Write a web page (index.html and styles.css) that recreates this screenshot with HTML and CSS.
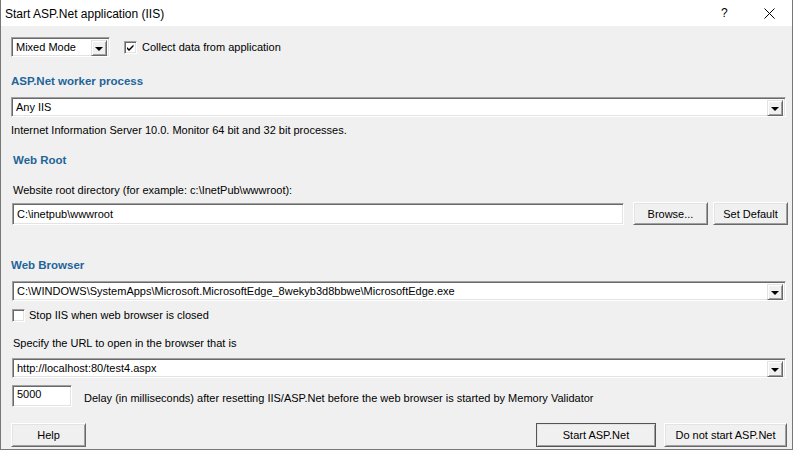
FILE: index.html
```html
<!DOCTYPE html>
<html>
<head>
<meta charset="utf-8">
<link rel="stylesheet" href="styles.css">
</head>
<body>
<div class="window">
  <div class="titlebar">
    <span class="title">Start ASP.Net application (IIS)</span>
    <span class="tb-help">?</span>
    <span class="tb-close"><svg width="11" height="11" viewBox="0 0 11 11"><path d="M0.5 0.5 L10.5 10.5 M10.5 0.5 L0.5 10.5" stroke="#000" stroke-width="1" fill="none"/></svg></span>
  </div>
  <div class="content">
    <div class="row row-mode">
      <div class="combo combo-mode"><span class="combo-text">Mixed Mode</span><span class="arrow"><i></i></span></div>
      <label class="check"><span class="box checked"><svg width="9" height="9" viewBox="0 0 9 9"><path d="M1 4 L3 6 L7.5 1.5 L7.5 3.5 L3 8 L1 6 Z" fill="#000"/></svg></span>Collect data from application</label>
    </div>

    <div class="section s-worker">ASP.Net worker process</div>
    <div class="combo combo-wide c-iis"><span class="combo-text">Any IIS</span><span class="arrow"><i></i></span></div>
    <div class="text t-iis">Internet Information Server 10.0. Monitor 64 bit and 32 bit processes.</div>

    <div class="section s-root">Web Root</div>
    <div class="text t-root">Website root directory (for example: c:\InetPub\wwwroot):</div>
    <div class="row row-root">
      <div class="edit edit-root">C:\inetpub\wwwroot</div>
      <button class="btn btn-browse">Browse...</button>
      <button class="btn btn-default">Set Default</button>
    </div>

    <div class="section s-browser">Web Browser</div>
    <div class="combo combo-wide c-browser"><span class="combo-text">C:\WINDOWS\SystemApps\Microsoft.MicrosoftEdge_8wekyb3d8bbwe\MicrosoftEdge.exe</span><span class="arrow"><i></i></span></div>
    <label class="check check-stop"><span class="box"></span>Stop IIS when web browser is closed</label>
    <div class="text t-url">Specify the URL to open in the browser that is</div>
    <div class="combo combo-wide c-url"><span class="combo-text">http://localhost:80/test4.aspx</span><span class="arrow"><i></i></span></div>
    <div class="row row-delay">
      <div class="edit edit-delay">5000</div>
      <span class="delay-label">Delay (in milliseconds) after resetting IIS/ASP.Net before the web browser is started by Memory Validator</span>
    </div>

    <div class="row footer">
      <button class="btn btn-help">Help</button>
      <span class="spacer"></span>
      <button class="btn btn-start">Start ASP.Net</button>
      <button class="btn btn-nostart">Do not start ASP.Net</button>
    </div>
  </div>
</div>
</body>
</html>
```

FILE: styles.css
```css
* { box-sizing: border-box; }
html, body { margin: 0; padding: 0; }
body {
  width: 793px;
  height: 450px;
  overflow: hidden;
  font-family: "Liberation Sans", Arial, sans-serif;
  font-size: 11px;
  color: #000;
  background: #f0f0f0;
}
.window {
  width: 793px;
  height: 450px;
  border-left: 1px solid #777;
  border-right: 1px solid #777;
  border-bottom: 1px solid #777;
  background: #f0f0f0;
  display: flex;
  flex-direction: column;
}
.titlebar {
  height: 26px;
  background: #fff;
  display: flex;
  align-items: center;
  position: relative;
  flex: none;
}
.title {
  font-size: 12px;
  margin-left: 4px;
  margin-top: 1px;
}
.tb-help {
  position: absolute;
  left: 720px;
  top: 6px;
  font-size: 12px;
}
.tb-close {
  position: absolute;
  left: 763px;
  top: 8px;
  line-height: 0;
}
.content {
  padding: 0 0 0 9px;
  display: flex;
  flex-direction: column;
  align-items: flex-start;
}
.row { display: flex; align-items: center; }
.row-mode { margin-top: 11px; height: 20px; }

.combo {
  position: relative;
  height: 20px;
  background: #fff;
  border-top: 1px solid #a0a0a0;
  border-left: 1px solid #a0a0a0;
  border-right: 1px solid #fff;
  border-bottom: 1px solid #fff;
  box-shadow: inset 1px 1px 0 #696969, inset -1px -1px 0 #e3e3e3;
  display: flex;
  align-items: center;
  padding-left: 4px;
}
.combo-text { white-space: nowrap; }
.arrow {
  position: absolute;
  right: 2px;
  top: 2px;
  width: 16px;
  height: 16px;
  background: #f0f0f0;
  border-top: 1px solid #e3e3e3;
  border-left: 1px solid #e3e3e3;
  border-right: 1px solid #696969;
  border-bottom: 1px solid #696969;
  box-shadow: inset 1px 1px 0 #fff, inset -1px -1px 0 #a0a0a0;
  display: flex;
  align-items: center;
  justify-content: center;
}
.arrow i {
  display: block;
  width: 0;
  height: 0;
  border-left: 4px solid transparent;
  border-right: 4px solid transparent;
  border-top: 4px solid #000;
  margin-top: 1px;
}
.combo-mode { width: 99px; margin-left: 1px; }
.combo-wide { width: 775px; }

.check { display: flex; align-items: center; white-space: nowrap; }
.box {
  width: 13px;
  height: 13px;
  background: #fff;
  border-top: 1px solid #a0a0a0;
  border-left: 1px solid #a0a0a0;
  border-right: 1px solid #fff;
  border-bottom: 1px solid #fff;
  box-shadow: inset 1px 1px 0 #696969, inset -1px -1px 0 #e3e3e3;
  display: flex;
  align-items: center;
  justify-content: center;
  margin-right: 5px;
}
.row-mode .check { margin-left: 14px; }

.section {
  font-weight: bold;
  color: #1e6599;
  font-size: 11.5px;
  line-height: 14px;
  height: 14px;
}
.text { line-height: 14px; height: 14px; white-space: nowrap; }
.s-worker { margin-top: 17px; margin-left: 1px; }
.c-iis { margin-top: 9px; margin-left: 1px; }
.t-iis { margin-top: 6px; margin-left: 1px; }
.s-root { margin-top: 16px; margin-left: 3px; }
.t-root { margin-top: 16px; margin-left: 3px; }
.row-root { margin-top: 5px; margin-left: 2px; }
.edit {
  height: 22px;
  background: #fff;
  border-top: 1px solid #a0a0a0;
  border-left: 1px solid #a0a0a0;
  border-right: 1px solid #fff;
  border-bottom: 1px solid #fff;
  box-shadow: inset 1px 1px 0 #696969, inset -1px -1px 0 #e3e3e3;
  padding-left: 4px;
  display: flex;
  align-items: center;
}
.edit-root { width: 612px; }
.btn {
  font-family: inherit;
  font-size: 11px;
  color: #000;
  height: 23px;
  background: #f0f0f0;
  border-top: 1px solid #fff;
  border-left: 1px solid #fff;
  border-right: 1px solid #696969;
  border-bottom: 1px solid #696969;
  box-shadow: inset 1px 1px 0 #e3e3e3, inset -1px -1px 0 #a0a0a0;
  padding: 0;
  margin: 0;
}
.btn-browse { width: 75px; margin-left: 9px; }
.btn-default { width: 75px; margin-left: 5px; }

.s-browser { margin-top: 33px; margin-left: 1px; }
.c-browser { margin-top: 9px; margin-left: 2px; width: 774px; }
.check-stop { margin-top: 7px; margin-left: 2px; height: 14px; }
.check-stop .box { margin-right: 4px; }
.t-url { margin-top: 14px; margin-left: 3px; }
.c-url { margin-top: 8px; margin-left: 2px; width: 774px; }
.row-delay { margin-top: 7px; margin-left: 2px; }
.edit-delay { width: 60px; height: 22px; align-items: flex-start; padding-top: 2px; }
.delay-label { margin-left: 12px; margin-top: 3px; white-space: nowrap; }

.footer { margin-top: 16px; width: 776px; height: 24px; margin-left: 1px; }
.footer .btn { height: 24px; }
.btn-help { width: 75px; }
.spacer { flex: 1; }
.btn-start {
  width: 120px;
  border-color: #696969;
  border-top-color: #fff;
  border-left-color: #fff;
  outline: 1px solid #555;
  outline-offset: -1px;
}
.btn-nostart { width: 123px; margin-left: 8px; }
```
